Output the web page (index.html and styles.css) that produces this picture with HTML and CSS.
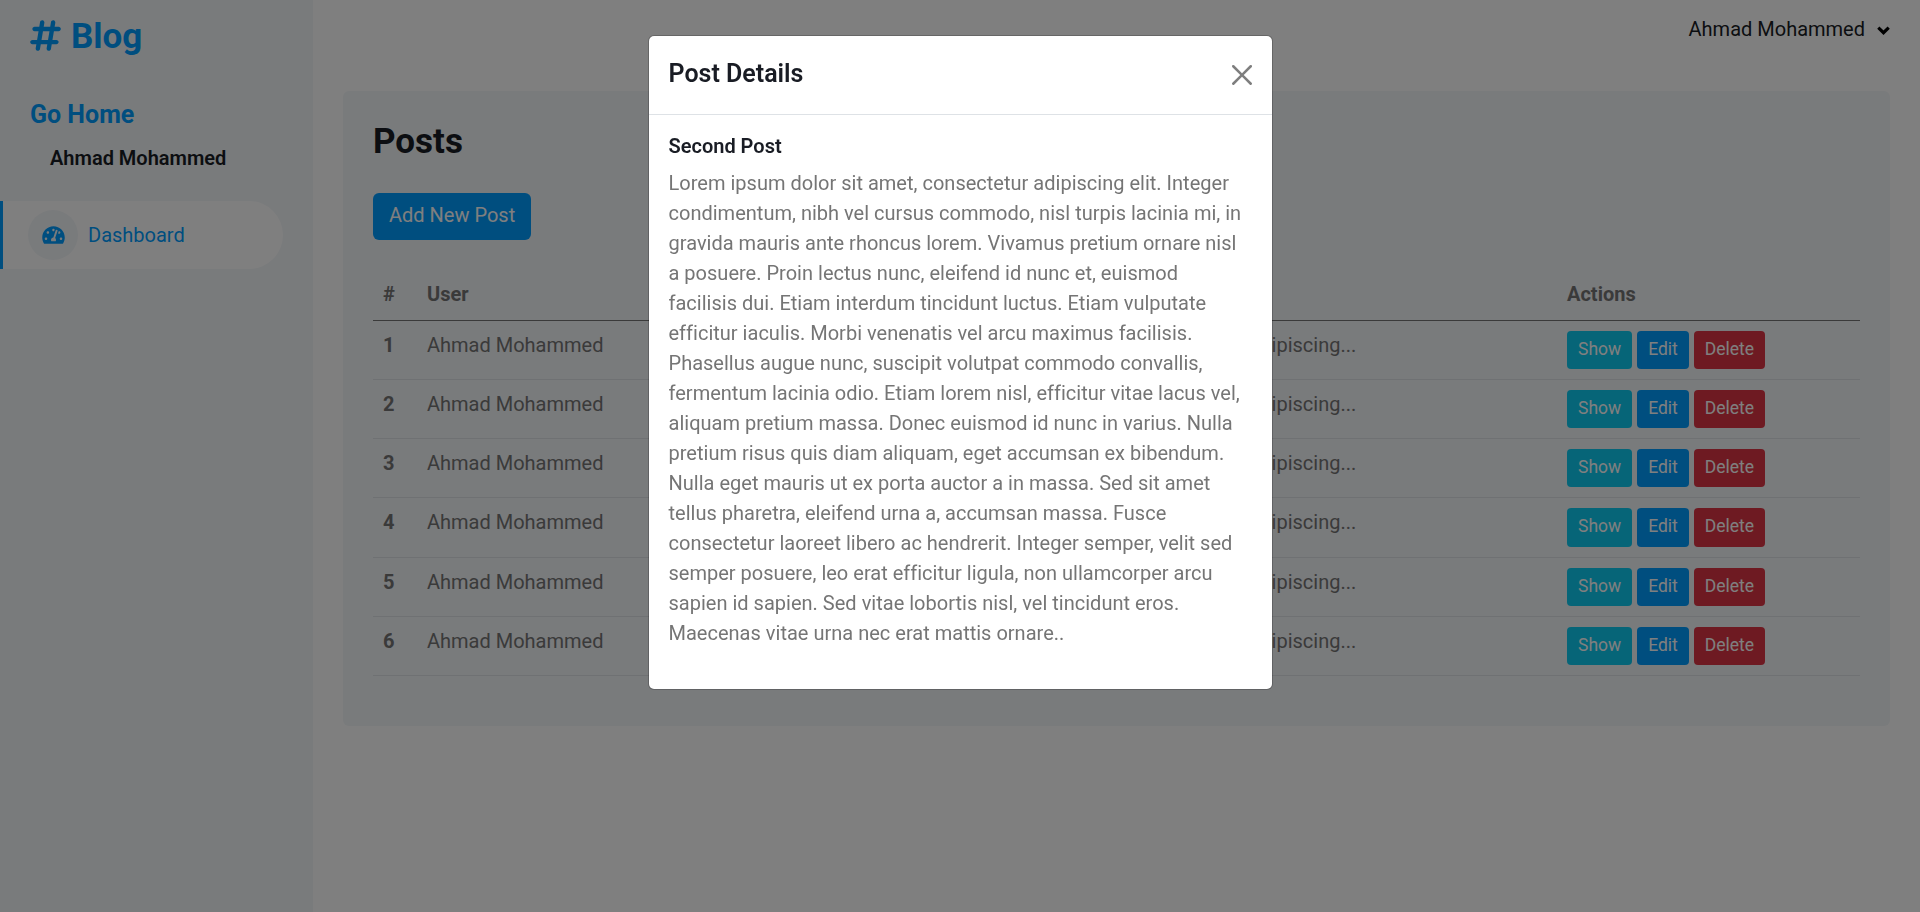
FILE: index.html
```
<!DOCTYPE html>
<html lang="en">
<head>
<meta charset="utf-8">
<title>Blog - Posts</title>
<link rel="stylesheet" href="styles.css">
</head>
<body>
<div class="layout">
  <aside class="sidebar">
    <a class="brand"><svg class="hash" viewBox="0 0 448 512"><path d="M181.300 32.400c17.400 2.900 29.200 19.400 26.300 36.800L197.800 128h95.100l11.500-69.300c2.900-17.400 19.400-29.200 36.800-26.300s29.200 19.400 26.300 36.800L357.800 128H416c17.700 0 32 14.300 32 32s-14.300 32-32 32h-68.900L325.800 320H384c17.700 0 32 14.300 32 32s-14.300 32-32 32h-68.900l-11.500 69.300c-2.900 17.400-19.400 29.200-36.800 26.300s-29.200-19.400-26.300-36.800l9.800-58.700h-95.200l-11.500 69.300c-2.900 17.400-19.400 29.200-36.800 26.300s-29.200-19.400-26.300-36.800L90.200 384H32c-17.700 0-32-14.300-32-32s14.300-32 32-32h68.900l21.300-128H64c-17.700 0-32-14.300-32-32s14.300-32 32-32h68.900l11.500-69.300c2.900-17.400 19.400-29.200 36.800-26.300zM187.100 192l-21.300 128h95.100l21.300-128z"/></svg><span>Blog</span></a>
    <a class="home">Go Home</a>
    <div class="profile">Ahmad Mohammed</div>
    <a class="nav-link">
      <span class="nav-icon"><svg viewBox="0 0 576 512"><path d="M288 32C129 32 0 161 0 320c0 52.800 14.300 102.300 39.100 144.800 5.600 9.600 16.300 15.200 27.400 15.200h443c11.100 0 21.800-5.600 27.400-15.200C561.800 422.300 576 372.800 576 320 576 161 447 32 288 32zm0 64c14.700 0 26.600 10.100 30.300 23.700-1.100 2.300-2.600 4.200-3.500 6.700l-9.200 27.700c-5.100 3.500-11 6-17.600 6-17.700 0-32-14.300-32-32s14.300-32 32-32zM96 384c-17.700 0-32-14.300-32-32s14.300-32 32-32 32 14.300 32 32-14.300 32-32 32zm48-160c-17.700 0-32-14.300-32-32s14.300-32 32-32 32 14.300 32 32-14.300 32-32 32zm246.800-72.400-61.300 184C343.100 347.300 352 364.500 352 384c0 11.700-3.400 22.600-8.900 32H232.900c-5.500-9.500-8.900-20.300-8.900-32 0-33.900 26.500-61.400 59.900-63.600l61.300-184c4.200-12.600 17.700-19.500 30.400-15.200 12.600 4.200 19.400 17.800 15.200 30.400zm14.700 57.200 15.500-46.600c3.500-1.300 7.100-2.200 11.100-2.200 17.700 0 32 14.300 32 32s-14.300 32-32 32c-11.400 0-20.900-6.300-26.600-15.200zM480 384c-17.700 0-32-14.300-32-32s14.300-32 32-32 32 14.300 32 32-14.300 32-32 32z"/></svg></span>
      <span>Dashboard</span>
    </a>
  </aside>
  <div class="content">
    <header class="topbar"><span>Ahmad Mohammed</span><svg viewBox="0 0 13 10"><path d="M1.300 1.700 6.500 6.700 11.700 1.700"/></svg></header>
    <main class="card">
      <h3 class="title">Posts</h3>
      <a class="btn btn-primary">Add New Post</a>
      <table class="table">
        <colgroup><col class="c-num"><col class="c-user"><col class="c-title"><col class="c-body"><col class="c-actions"></colgroup>
        <thead><tr><th>#</th><th>User</th><th></th><th></th><th>Actions</th></tr></thead>
        <tbody>
          <tr><th>1</th><td>Ahmad Mohammed</td><td></td><td>Lorem ipsum dolor sit amet, consectetur adipiscing...</td><td class="actions"><a class="btn btn-sm btn-info">Show</a> <a class="btn btn-sm btn-primary">Edit</a> <a class="btn btn-sm btn-danger">Delete</a></td></tr>
          <tr><th>2</th><td>Ahmad Mohammed</td><td></td><td>Lorem ipsum dolor sit amet, consectetur adipiscing...</td><td class="actions"><a class="btn btn-sm btn-info">Show</a> <a class="btn btn-sm btn-primary">Edit</a> <a class="btn btn-sm btn-danger">Delete</a></td></tr>
          <tr><th>3</th><td>Ahmad Mohammed</td><td></td><td>Lorem ipsum dolor sit amet, consectetur adipiscing...</td><td class="actions"><a class="btn btn-sm btn-info">Show</a> <a class="btn btn-sm btn-primary">Edit</a> <a class="btn btn-sm btn-danger">Delete</a></td></tr>
          <tr class="tall"><th>4</th><td>Ahmad Mohammed</td><td></td><td>Lorem ipsum dolor sit amet, consectetur adipiscing...</td><td class="actions"><a class="btn btn-sm btn-info">Show</a> <a class="btn btn-sm btn-primary">Edit</a> <a class="btn btn-sm btn-danger">Delete</a></td></tr>
          <tr><th>5</th><td>Ahmad Mohammed</td><td></td><td>Lorem ipsum dolor sit amet, consectetur adipiscing...</td><td class="actions"><a class="btn btn-sm btn-info">Show</a> <a class="btn btn-sm btn-primary">Edit</a> <a class="btn btn-sm btn-danger">Delete</a></td></tr>
          <tr><th>6</th><td>Ahmad Mohammed</td><td></td><td>Lorem ipsum dolor sit amet, consectetur adipiscing...</td><td class="actions"><a class="btn btn-sm btn-info">Show</a> <a class="btn btn-sm btn-primary">Edit</a> <a class="btn btn-sm btn-danger">Delete</a></td></tr>
        </tbody>
      </table>
    </main>
  </div>
</div>
<div class="backdrop">
  <div class="modal">
    <div class="modal-header"><h5>Post Details</h5><svg viewBox="0 0 16 16"><path d="M.293.293a1 1 0 011.414 0L8 6.586 14.293.293a1 1 0 111.414 1.414L9.414 8l6.293 6.293a1 1 0 01-1.414 1.414L8 9.414l-6.293 6.293a1 1 0 01-1.414-1.414L6.586 8 .293 1.707a1 1 0 010-1.414z"/></svg></div>
    <div class="modal-body">
      <h6>Second Post</h6>
      <p>Lorem ipsum dolor sit amet, consectetur adipiscing elit. Integer condimentum, nibh vel cursus commodo, nisl turpis lacinia mi, in gravida mauris ante rhoncus lorem. Vivamus pretium ornare nisl a posuere. Proin lectus nunc, eleifend id nunc et, euismod facilisis dui. Etiam interdum tincidunt luctus. Etiam vulputate efficitur iaculis. Morbi venenatis vel arcu maximus facilisis. Phasellus augue nunc, suscipit volutpat commodo convallis, fermentum lacinia odio. Etiam lorem nisl, efficitur vitae lacus vel, aliquam pretium massa. Donec euismod id nunc in varius. Nulla pretium risus quis diam aliquam, eget accumsan ex bibendum. Nulla eget mauris ut ex porta auctor a in massa. Sed sit amet tellus pharetra, eleifend urna a, accumsan massa. Fusce consectetur laoreet libero ac hendrerit. Integer semper, velit sed semper posuere, leo erat efficitur ligula, non ullamcorper arcu sapien id sapien. Sed vitae lobortis nisl, vel tincidunt eros. Maecenas vitae urna nec erat mattis ornare..</p>
    </div>
  </div>
</div>
</body>
</html>
```
FILE: styles.css
```
* { box-sizing: border-box; }
html { font-size: 20px; }
body { margin: 0; font-family: Roboto, "Liberation Sans", sans-serif; font-size: 1rem; line-height: 1.5; color: #757575; background: #fff; overflow: hidden; }
h3, h5, h6, p { margin: 0; }
svg { fill: currentColor; display: block; }
.layout { display: flex; height: 912px; }
.sidebar { width: 313px; flex: none; background: #f3f6f9; padding-right: 30px; color: #009cff; }
.brand { display: flex; align-items: center; margin-left: 30px; padding-top: 16px; height: 58px; font-size: 35px; font-weight: 700; line-height: 42px; gap: 10px; }
.hash { width: 31px; height: 35px; margin-bottom: 4px; }
.home { display: block; margin: 42px 0 0 30px; font-size: 25px; font-weight: 700; line-height: 30px; }
.profile { margin: 16px 0 0 50px; color: #191c24; font-weight: 600; line-height: 24px; }
.nav-link { display: flex; align-items: center; gap: 10px; margin-top: 31px; height: 68px; padding-left: 25px; border-left: 3px solid #009cff; border-radius: 0 34px 34px 0; background: #fff; }
.nav-icon { width: 50px; height: 50px; border-radius: 50%; background: #f3f6f9; display: flex; align-items: center; justify-content: center; }
.nav-icon svg { width: 23px; height: 20px; }
.content { flex: 1; padding: 0 30px; }
.topbar { height: 91px; padding-top: 14px; display: flex; justify-content: flex-end; gap: 12px; color: #191c24; }
.topbar svg { width: 13px; height: 10px; margin-top: 12px; fill: none; stroke: #000; stroke-width: 3.200; }
.card { height: 635px; padding: 30px; border-radius: 6px; background: #f3f6f9; }
.title { color: #191c24; font-size: 35px; font-weight: 700; line-height: 42px; margin-bottom: 30px; }
.btn { display: inline-block; color: #fff; border-radius: 6px; padding: 7px 16px 10px; line-height: 30px; }
.btn-sm { border-radius: 4px; padding: 5px 11px 7px; font-size: 17.5px; line-height: 26px; }
.btn-primary { background: #009cff; }
.btn-info { background: #0dcaf0; }
.btn-danger { background: #dc3545; }
.table { width: 1487px; margin-top: 29px; border-collapse: collapse; table-layout: fixed; }
.c-num { width: 44px; } .c-user { width: 280px; } .c-title { width: 178px; } .c-body { width: 682px; }
.table th, .table td { padding: 9px 10px 10px; text-align: left; vertical-align: top; height: 59px; border-bottom: 1px solid #dee2e6; white-space: nowrap; }
.table thead th { height: 51px; padding-top: 10px; border-bottom-color: #757575; }
.table .actions { padding-top: 10px; }
.table .tall td { height: 60px; }
.table .tall .btn { padding-bottom: 8px; }
.table .btn { vertical-align: top; }
.backdrop { position: fixed; inset: 0; background: rgba(0, 0, 0, .5); display: flex; justify-content: center; align-items: flex-start; padding-top: 35px; }
.modal { width: 625px; height: 655px; border: 1px solid rgba(0, 0, 0, .2); background: #fff; background-clip: padding-box; border-radius: 6px; }
.modal-header { display: flex; justify-content: space-between; height: 79px; padding: 21px 20px 20px; border-bottom: 1px solid #dee2e6; color: #191c24; }
.modal-header h5 { font-size: 25px; font-weight: 600; line-height: 34px; }
.modal-header svg { width: 20px; height: 20px; margin-top: 8px; color: #000; opacity: .5; }
.modal-body { padding: 19px 24px 20px 20px; }
.modal-body p { letter-spacing: .01px; font-variant-ligatures: common-ligatures; }
.modal-body h6 { color: #191c24; font-size: 20px; font-weight: 600; line-height: 24px; margin-bottom: 10px; }
```
